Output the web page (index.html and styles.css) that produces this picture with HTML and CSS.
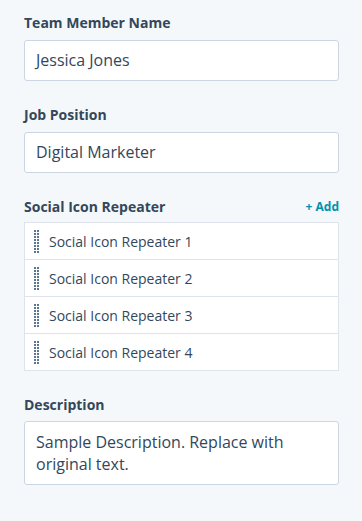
FILE: index.html
```html
<!DOCTYPE html>
<html>
<head>
<meta charset="utf-8">
<link rel="stylesheet" href="styles.css">
</head>
<body>
<div class="panel">
  <div class="field">
    <label class="label">Team Member Name</label>
    <div class="input">Jessica Jones</div>
  </div>
  <div class="field">
    <label class="label">Job Position</label>
    <div class="input">Digital Marketer</div>
  </div>
  <div class="field">
    <div class="head">
      <label class="label">Social Icon Repeater</label>
      <span class="add">+ Add</span>
    </div>
    <ul class="list">
      <li class="item"><span class="handle"></span>Social Icon Repeater 1</li>
      <li class="item"><span class="handle"></span>Social Icon Repeater 2</li>
      <li class="item"><span class="handle"></span>Social Icon Repeater 3</li>
      <li class="item"><span class="handle"></span>Social Icon Repeater 4</li>
    </ul>
  </div>
  <div class="field">
    <label class="label label-tight">Description</label>
    <div class="textarea">Sample Description. Replace with original text.</div>
  </div>
</div>
</body>
</html>
```
FILE: styles.css
```css
* { box-sizing: border-box; }
html, body { margin: 0; padding: 0; }
body {
  background: #f5f8fa;
  font-family: "Open Sans", "Lato", sans-serif;
  color: #33475b;
  width: 362px;
  height: 521px;
}
.panel {
  padding: 13px 23px 0 24px;
  display: flex;
  flex-direction: column;
  gap: 24px;
}
.field { display: flex; flex-direction: column; }
.label {
  display: block;
  font-size: 14px;
  font-weight: 700;
  line-height: 20px;
  margin-bottom: 7px;
}
.label-tight { margin-bottom: 6px; }
.input {
  height: 41px;
  background: #fff;
  border: 1px solid #cbd6e2;
  border-radius: 3px;
  padding: 0 11px;
  font-size: 16px;
  line-height: 39px;
}
.head {
  display: flex;
  justify-content: space-between;
  align-items: flex-start;
}
.head .label { margin-bottom: 5px; }
.add {
  color: #0091ae;
  font-size: 12px;
  font-weight: 700;
  line-height: 20px;
}
.list {
  list-style: none;
  margin: 0;
  padding: 0;
  background: #fff;
  border: 1px solid #dfe3eb;
}
.item {
  height: 37px;
  display: flex;
  align-items: center;
  font-size: 14px;
  padding-left: 9px;
  border-top: 1px solid #dfe3eb;
}
.item:first-child { height: 36px; border-top: none; }
.handle {
  width: 5px;
  height: 23px;
  margin-right: 10px;
  background-image: linear-gradient(90deg, #5c7591 2px, transparent 2px, transparent 3px, #5c7591 3px);
  -webkit-mask-image: repeating-linear-gradient(180deg, #000 0 2px, transparent 2px 3px);
  mask-image: repeating-linear-gradient(180deg, #000 0 2px, transparent 2px 3px);
}
.textarea {
  height: 64px;
  background: #fff;
  border: 1px solid #cbd6e2;
  border-radius: 3px;
  padding: 9px 11px;
  font-size: 16px;
  line-height: 22px;
}
```
